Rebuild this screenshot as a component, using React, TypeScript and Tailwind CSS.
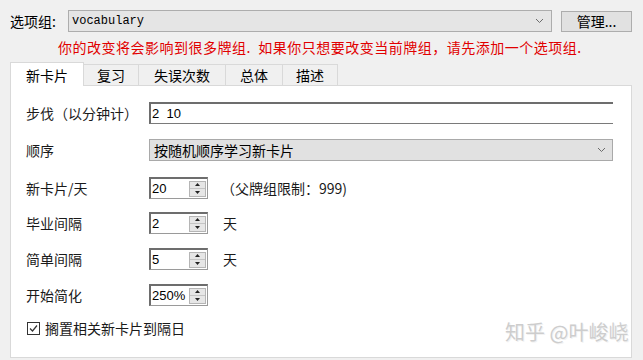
import React from 'react';

const CJK = { fontFamily: '"Noto Sans CJK SC", "Noto Sans", sans-serif' };

function Chevron() {
    return (
        <svg width="9" height="6" viewBox="0 0 9 6" className="shrink-0">
            <path d="M1 1 L4.5 4.5 L8 1" fill="none" stroke="#6b6b6b" strokeWidth="1" />
        </svg>
    );
}

function Spin({ value }: { value: string }) {
    return (
        <div className="flex items-center w-[59px] h-[22px] bg-white border-t-2 border-l-2 border-[#6d6d6d] border-r border-b border-r-[#9a9a9a] border-b-[#9a9a9a]">
            <span className="flex-1 pl-[1px] text-[13px] leading-none text-black" style={{ fontFamily: '"Liberation Sans", Arial, sans-serif' }}>
                {value}
            </span>
            <div className="flex flex-col w-[17px] h-[16px] mr-[1px] border border-[#b5b5b5] bg-[#e6e6e6]">
                <div className="flex-1 flex items-center justify-center border-b border-[#c4c4c4]">
                    <svg width="5" height="3" viewBox="0 0 5 3"><path d="M0 3 L2.5 0 L5 3 Z" fill="#222" /></svg>
                </div>
                <div className="flex-1 flex items-center justify-center">
                    <svg width="5" height="3" viewBox="0 0 5 3"><path d="M0 0 L2.5 3 L5 0 Z" fill="#222" /></svg>
                </div>
            </div>
        </div>
    );
}

function Label({ children }: { children: React.ReactNode }) {
    return <div className="w-[123px] shrink-0 text-[14px] leading-none text-[#1a1a1a]">{children}</div>;
}

const TABS = ['新卡片', '复习', '失误次数', '总体', '描述'];
const TAB_W = [74, 55, 87, 57, 55];

export default function App() {
    return (
        <div className="w-[643px] h-[360px] bg-[#f0f0f0] overflow-hidden relative" style={CJK}>
            {/* top row */}
            <div className="flex items-center pl-[10px] pt-[10px] h-[32px]">
                <div className="w-[58px] text-[14px] leading-none text-black">选项组:</div>
                <div className="flex items-center w-[484px] h-[22px] bg-[#e5e5e5] border border-[#adadad] pl-[3px] pr-[7px]">
                    <span className="flex-1 text-[12px] leading-none text-black" style={{ fontFamily: '"Liberation Mono", monospace' }}>
                        vocabulary
                    </span>
                    <Chevron />
                </div>
                <button className="ml-[9px] w-[71px] h-[21px] bg-[#e1e1e1] border border-[#adadad] text-[14px] leading-none text-black">
                    管理...
                </button>
            </div>

            {/* warning */}
            <div className="pl-[58px] mt-[6px] h-[19px] text-[14px] leading-[19px] tracking-[0.5px] text-[#e10000] whitespace-nowrap">
                你的改变将会影响到很多牌组.&nbsp;&nbsp;如果你只想要改变当前牌组，请先添加一个选项组.
            </div>

            {/* tabs */}
            <div className="flex items-end pl-[10px] mt-[5px] h-[24px]">
                {TABS.map((t, i) => (
                    <div
                        key={t}
                        style={{ width: TAB_W[i] }}
                        className={
                            i === 0
                                ? 'h-[24px] bg-white border border-b-0 border-[#d9d9d9] flex items-center justify-center text-[14px] leading-none text-black relative z-10'
                                : 'h-[22px] bg-[#f0f0f0] border border-l-0 border-[#d9d9d9] flex items-center justify-center text-[14px] leading-none text-black'
                        }
                    >
                        {t}
                    </div>
                ))}
            </div>

            {/* panel */}
            <div className="ml-[10px] w-[622px] h-[273px] bg-white border border-[#d9d9d9] -mt-[1px] pl-[15px] pt-[16px]">
                <div className="flex items-center h-[22px]">
                    <Label>步伐（以分钟计）</Label>
                    <div className="flex items-center w-[464px] h-[22px] border-t-2 border-l-2 border-[#6d6d6d] border-b border-b-[#7a7a7a] pl-[1px] text-[13px] leading-none text-black" style={{ fontFamily: '"Liberation Sans", Arial, sans-serif' }}>
                        2&nbsp;&nbsp;10
                    </div>
                </div>

                <div className="flex items-center h-[22px] mt-[15px]">
                    <Label>顺序</Label>
                    <div className="flex items-center w-[464px] h-[22px] bg-[#e1e1e1] border border-[#a9a9a9] pl-[4px] pr-[6px]">
                        <span className="flex-1 text-[14px] leading-none text-black">按随机顺序学习新卡片</span>
                        <Chevron />
                    </div>
                </div>

                <div className="flex items-center h-[22px] mt-[16px]">
                    <Label>新卡片/天</Label>
                    <Spin value="20" />
                    <span className="ml-[13px] text-[14px] leading-none text-[#1a1a1a]">（父牌组限制：999)</span>
                </div>

                <div className="flex items-center h-[22px] mt-[13px]">
                    <Label>毕业间隔</Label>
                    <Spin value="2" />
                    <span className="ml-[15px] text-[14px] leading-none text-[#1a1a1a]">天</span>
                </div>

                <div className="flex items-center h-[22px] mt-[14px]">
                    <Label>简单间隔</Label>
                    <Spin value="5" />
                    <span className="ml-[15px] text-[14px] leading-none text-[#1a1a1a]">天</span>
                </div>

                <div className="flex items-center h-[22px] mt-[14px]">
                    <Label>开始简化</Label>
                    <Spin value="250%" />
                </div>

                <div className="flex items-center h-[20px] mt-[12px] pl-[1px]">
                    <svg width="13" height="13" viewBox="0 0 13 13" className="shrink-0">
                        <rect x="0.5" y="0.5" width="12" height="12" fill="#fff" stroke="#333" />
                        <path d="M3 6.5 L5.5 9 L10 3.5" fill="none" stroke="#333" strokeWidth="1.2" />
                    </svg>
                    <span className="ml-[5px] text-[14px] leading-none text-[#1a1a1a]">搁置相关新卡片到隔日</span>
                </div>
            </div>

            {/* watermark */}
            <div className="absolute left-[505px] top-[320px] text-[20px] leading-[24px] text-[#cdcdcd] whitespace-nowrap" style={{ textShadow: '1px 1px 0 #f2f2f2' }}>
                知乎 @叶峻峣
            </div>
        </div>
    );
}
